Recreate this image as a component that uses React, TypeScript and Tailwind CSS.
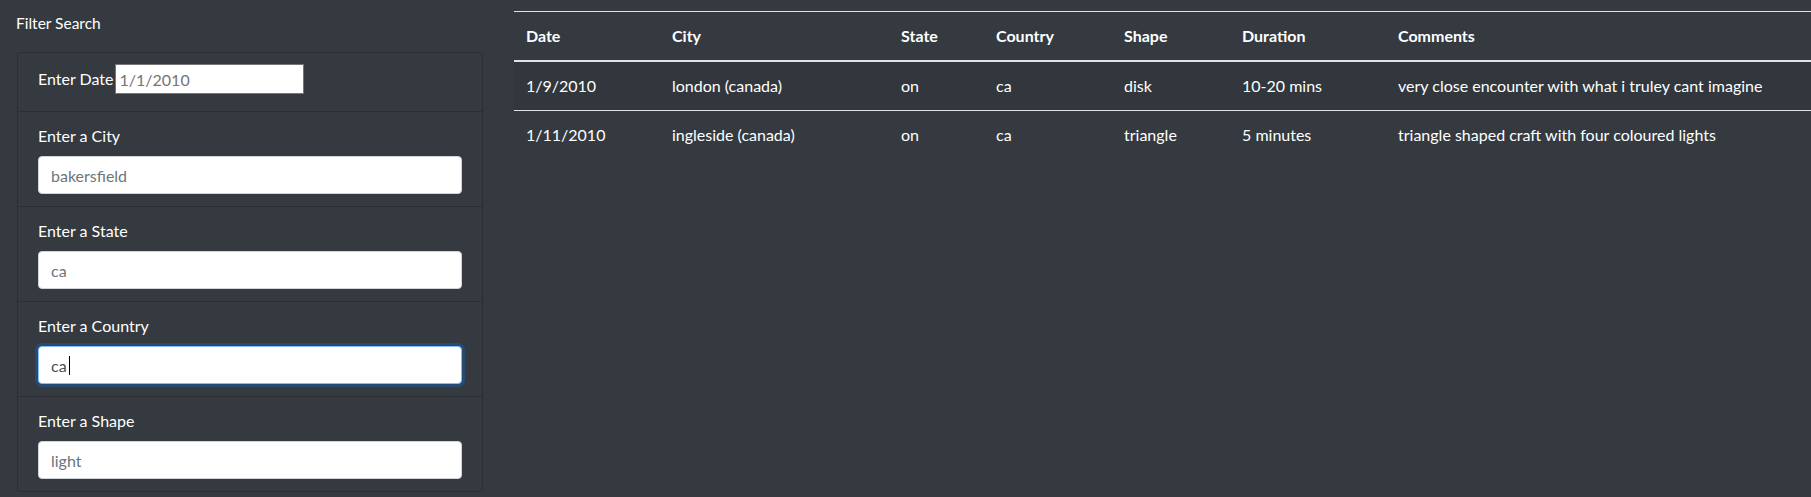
import React from 'react';

const rows = [
  { date: '1/9/2010', city: 'london (canada)', state: 'on', country: 'ca', shape: 'disk', duration: '10-20 mins', comments: 'very close encounter with what i truley cant imagine' },
  { date: '1/11/2010', city: 'ingleside (canada)', state: 'on', country: 'ca', shape: 'triangle', duration: '5 minutes', comments: 'triangle shaped craft with four coloured lights' },
];

const fields = [
  { label: 'Enter a City', placeholder: 'bakersfield' },
  { label: 'Enter a State', placeholder: 'ca' },
  { label: 'Enter a Country', value: 'ca', focused: true },
  { label: 'Enter a Shape', placeholder: 'light' },
];

export default function App() {
  return (
    <div className="min-h-screen bg-[#343a40] text-white font-['Lato','Liberation_Sans',sans-serif] text-[16px] leading-6">
      <div className="flex pl-[17px]">
        {/* Filters */}
        <div className="w-[466px] shrink-0">
          <p className="pt-[11px] h-[52px] -ml-[1px] text-[15.5px]">Filter Search</p>
          <ul className="border border-[#2a2f34] rounded-[4px]">
            <li className="flex items-center pl-[20px] pt-[11px] pb-[17px] h-[59px] border-b border-[#2a2f34]">
              <label className="mr-[1px]">Enter Date</label>
              <input
                className="w-[189px] h-[30px] bg-white border border-[#767676] px-[4px] text-[16px] text-black placeholder:text-[#757575] outline-none"
                placeholder="1/1/2010"
              />
            </li>
            {fields.map((f, i) => (
              <li key={f.label} className={`px-[20px] pt-[12px] pb-[12px] ${i < fields.length - 1 ? 'border-b border-[#2a2f34]' : ''}`}>
                <label className="block mb-[8px]">{f.label}</label>
                <div className="relative">
                  <input
                    className={`w-full h-[38px] rounded-[4px] bg-white px-[12px] text-[16px] text-[#495057] placeholder:text-[#6c757d] outline-none border ${f.focused ? 'border-[#80bdff] shadow-[0_0_0_3px_rgba(0,123,255,0.25)]' : 'border-[#ced4da]'}`}
                    placeholder={f.placeholder}
                    defaultValue={f.value}
                  />
                  {f.focused && <span className="absolute left-[31px] top-[10px] w-px h-[19px] bg-black" />}
                </div>
              </li>
            ))}
          </ul>
        </div>

        {/* Results */}
        <div className="ml-[31px] flex-1 pt-[11px]">
          <table className="w-full table-fixed border-collapse text-left">
            <thead>
              <tr className="border-t border-[#dee2e6]">
                <th className="w-[146px] p-[12px] font-bold border-b-2 border-[#dee2e6]">Date</th>
                <th className="w-[229px] p-[12px] font-bold border-b-2 border-[#dee2e6]">City</th>
                <th className="w-[95px] p-[12px] font-bold border-b-2 border-[#dee2e6]">State</th>
                <th className="w-[128px] p-[12px] font-bold border-b-2 border-[#dee2e6]">Country</th>
                <th className="w-[118px] p-[12px] font-bold border-b-2 border-[#dee2e6]">Shape</th>
                <th className="w-[156px] p-[12px] font-bold border-b-2 border-[#dee2e6]">Duration</th>
                <th className="p-[12px] font-bold border-b-2 border-[#dee2e6]">Comments</th>
              </tr>
            </thead>
            <tbody>
              {rows.map((r, i) => (
                <tr key={r.date} className={`${i > 0 ? 'border-t border-[#dee2e6]' : ''} ${i % 2 === 0 ? 'bg-black/5' : ''}`}>
                  <td className="p-[12px]">{r.date}</td>
                  <td className="p-[12px]">{r.city}</td>
                  <td className="p-[12px]">{r.state}</td>
                  <td className="p-[12px]">{r.country}</td>
                  <td className="p-[12px]">{r.shape}</td>
                  <td className="p-[12px]">{r.duration}</td>
                  <td className="p-[12px] whitespace-nowrap">{r.comments}</td>
                </tr>
              ))}
            </tbody>
          </table>
        </div>
      </div>
    </div>
  );
}
